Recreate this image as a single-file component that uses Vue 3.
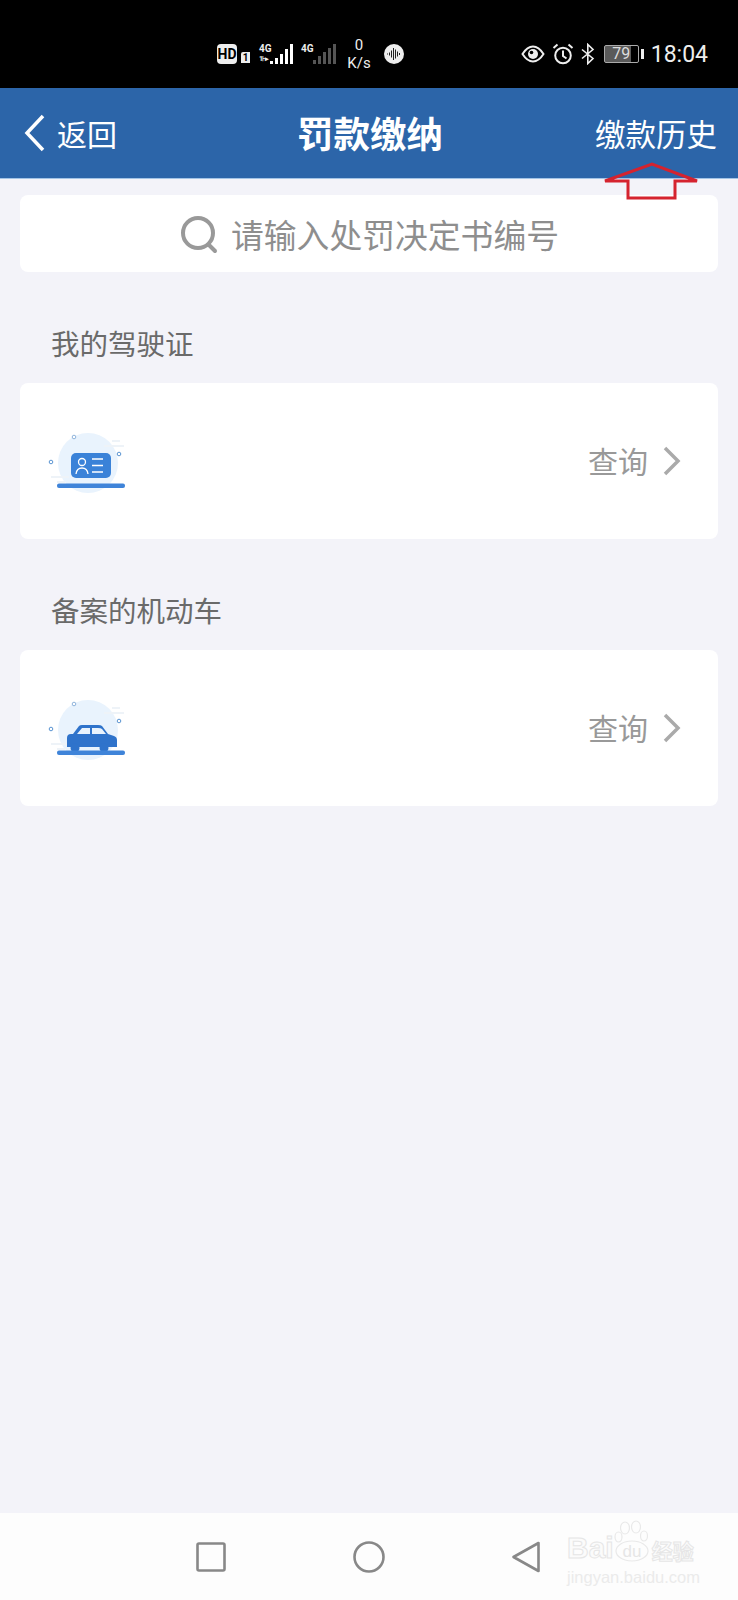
<script setup>
const sections = [
  { title: '我的驾驶证', kind: 'id' },
  { title: '备案的机动车', kind: 'car' },
]
</script>

<template>
  <div class="page">
    <div class="status">
      <div class="st-left">
        <span class="hd">HD</span>
        <span class="sim">1</span>
        <div class="net first">
          <div class="net-text"><span>4G</span><span>1⊦▸</span></div>
          <svg width="24" height="22" viewBox="0 0 24 22"><g fill="#fff"><rect x="0" y="18" width="3" height="3"/><rect x="5" y="15" width="3" height="6"/><rect x="10" y="11" width="3" height="10"/><rect x="15" y="6" width="3" height="15"/><rect x="20" y="1" width="3" height="20"/></g></svg>
        </div>
        <div class="net second">
          <div class="net-text"><span>4G</span><span>&nbsp;</span></div>
          <svg width="24" height="22" viewBox="0 0 24 22"><g fill="#555"><rect x="0" y="17" width="3" height="4"/><rect x="5" y="13" width="3" height="8"/><rect x="10" y="9" width="3" height="12"/><rect x="15" y="5" width="3" height="16"/><rect x="20" y="1" width="3" height="20"/></g></svg>
        </div>
        <div class="speed"><span>0</span><span>K/s</span></div>
        <svg class="wave" width="20" height="20" viewBox="0 0 20 20"><circle cx="10" cy="10" r="10" fill="#eee"/><path d="M3 10h1M5.500 8.500v3M7.500 6.500v7M9.500 4v12M11.500 5.500v9M13.500 7.500v5M15.500 9v2" stroke="#222" stroke-width="1" fill="none"/></svg>
      </div>
      <div class="st-right">
        <svg class="i-eye" width="24" height="18" viewBox="0 0 24 18"><path d="M1.500 9C5 3.500 8.500 1.500 12 1.500S19 3.500 22.500 9C19 14.500 15.500 16.500 12 16.500S5 14.500 1.500 9Z" fill="none" stroke="#eee" stroke-width="2"/><circle cx="12" cy="9" r="5" fill="#eee"/><circle cx="10.500" cy="7.500" r="1.800" fill="#000"/></svg>
        <svg class="i-alarm" width="22" height="22" viewBox="0 0 22 22"><circle cx="11" cy="12.500" r="7.800" fill="none" stroke="#eee" stroke-width="2"/><path d="M11 7.500V13l3.500 2.500M1.500 5 5.500 1.500M20.500 5l-4-3.500" fill="none" stroke="#eee" stroke-width="2"/></svg>
        <svg class="i-bt" width="14" height="22" viewBox="0 0 14 22"><path d="M1 6.500 12 15.500 6.800 20.500V1.500L12 6.500 1 15.500" fill="none" stroke="#eee" stroke-width="1.600"/></svg>
        <div class="battery"><div class="bat-body">79</div><div class="bat-cap"></div></div>
        <span class="clock">18:04</span>
      </div>
    </div>

    <header class="bar">
      <div class="back">
        <svg width="24" height="38" viewBox="0 0 24 38"><path d="M20 2 4 19l16 17" fill="none" stroke="#fff" stroke-width="3.500"/></svg>
        <span>返回</span>
      </div>
      <h1>罚款缴纳</h1>
      <span class="history">缴款历史</span>
      <svg class="arrow" width="96" height="38" viewBox="0 0 96 38"><path d="M2 19 49 2l45 17H72v17H25V19Z" fill="none" stroke="#d5232f" stroke-width="3"/></svg>
    </header>

    <main class="content">
      <div class="search">
        <svg width="40" height="40" viewBox="0 0 40 40"><circle cx="19" cy="19" r="15" fill="none" stroke="#999" stroke-width="4"/><path d="m30 31 6 6" stroke="#999" stroke-width="4" stroke-linecap="round"/></svg>
        <span>请输入处罚决定书编号</span>
      </div>

      <section v-for="s in sections" :key="s.title">
        <h2>{{ s.title }}</h2>
        <div class="card">
          <svg class="pic" width="84" height="64" viewBox="0 0 84 64">
            <circle cx="40" cy="33" r="30" fill="#e9f3fd"/>
            <path d="M56 16h20M64 11h8M3 47h18M9 52h8" stroke="#eef3f8" stroke-width="2"/>
            <circle cx="26" cy="7" r="1.800" fill="#fff" stroke="#8fb4dc"/>
            <circle cx="71" cy="24" r="1.800" fill="#fff" stroke="#5a94d2"/>
            <circle cx="3" cy="32" r="1.800" fill="#fff" stroke="#5a94d2"/>
            <template v-if="s.kind === 'id'">
              <rect x="23" y="23" width="40" height="25" rx="5" fill="#3a82d8"/>
              <circle cx="34" cy="32" r="3.500" fill="none" stroke="#fff" stroke-width="1.300"/>
              <path d="M28 44c.5-4 2.500-6 6-6s5.500 2 6 6M44 29h11M44 35.500h11M44 42h11" fill="none" stroke="#fff" stroke-width="1.300"/>
            </template>
            <template v-else>
              <path d="M19 50V41q0-4 4-4h2l6-8q1-1 3-1h16q3 0 4 1l6 8 6 2q3 1 3 4v7Z" fill="#2f73cb"/>
              <path d="M29 37l5-6h8v6ZM44 31h6q3 0 4 1l4 5H44Z" fill="#e9f3fd"/>
              <circle cx="27" cy="51" r="4.500" fill="#2f73cb"/>
              <circle cx="56" cy="51" r="4.500" fill="#2f73cb"/>
            </template>
            <rect x="9" y="53.500" width="68" height="4.500" rx="2" fill="#3f84d9"/>
          </svg>
          <div class="action">
            <span>查询</span>
            <svg width="18" height="30" viewBox="0 0 18 30"><path d="m2 2 13 13L2 28" fill="none" stroke="#aaa" stroke-width="3.500"/></svg>
          </div>
        </div>
      </section>
    </main>

    <nav class="nav">
      <div class="keys">
        <svg width="30" height="30" viewBox="0 0 30 30"><rect x="1.500" y="1.500" width="27" height="27" rx="1.500" fill="none" stroke="#888" stroke-width="2.600"/></svg>
        <svg width="32" height="32" viewBox="0 0 32 32"><circle cx="16" cy="16" r="14.500" fill="none" stroke="#888" stroke-width="2.600"/></svg>
        <svg width="28" height="32" viewBox="0 0 28 32"><path d="M26.500 2v28L1.500 16Z" fill="none" stroke="#888" stroke-width="2.600" stroke-linejoin="round"/></svg>
      </div>
      <div class="mark">
        <div class="mark-top">
          <span class="mark-bai">Bai</span>
          <svg width="36" height="46" viewBox="0 0 36 46">
            <g fill="none" stroke="#e9e9e9" stroke-width="1.200">
              <ellipse cx="11" cy="9" rx="4.500" ry="6"/>
              <ellipse cx="22" cy="8" rx="4.500" ry="6"/>
              <ellipse cx="4.500" cy="18" rx="3.500" ry="5"/>
              <ellipse cx="30" cy="17" rx="3.500" ry="5"/>
              <ellipse cx="18" cy="32" rx="16" ry="10"/>
            </g>
            <text x="18" y="38" text-anchor="middle" font-size="17" font-family="Liberation Sans" fill="#e6e6e6">du</text>
          </svg>
          <span class="mark-cn">经验</span>
        </div>
        <div class="mark-sub">jingyan.baidu.com</div>
      </div>
    </nav>
  </div>
</template>

<style scoped>
.page {
  width: 738px;
  height: 1600px;
  background: #f3f3f9;
  display: flex;
  flex-direction: column;
  font-family: "Noto Sans CJK SC", "Noto Sans", sans-serif;
  overflow: hidden;
}
.status {
  height: 88px;
  background: #000;
  color: #eee;
  display: flex;
  align-items: center;
  justify-content: space-between;
  padding: 20px 30px 0 217px;
  box-sizing: border-box;
  font-family: Roboto, sans-serif;
}
.st-left, .st-right, .net { display: flex; align-items: center; }
.hd {
  background: #eee;
  color: #000;
  font-size: 14px;
  font-weight: 700;
  border-radius: 4px;
  width: 20px;
  height: 20px;
  line-height: 20px;
  text-align: center;
}
.sim {
  background: #eee;
  color: #000;
  font-size: 10px;
  font-weight: 700;
  width: 9px;
  height: 11px;
  line-height: 11px;
  margin: 6px 0 0 4px;
  text-align: center;
  border-radius: 2px 0 0 0;
}
.net.first { margin-left: 9px; }
.net.second { margin-left: 7px; }
.net-text {
  display: flex;
  flex-direction: column;
  width: 11px;
  font-size: 10px;
  line-height: 11px;
  font-weight: 700;
  white-space: nowrap;
}
.net.second .net-text { width: 12px; }
.net-text span:last-child { font-size: 7px; letter-spacing: -1px; }
.speed {
  display: flex;
  flex-direction: column;
  align-items: center;
  font-size: 15px;
  line-height: 18px;
  margin-left: 9px;
  width: 26px;
}
.wave { margin-left: 12px; }
.st-right svg { display: block; }
.i-alarm { margin-left: 7px; }
.i-bt { margin-left: 7px; }
.battery { display: flex; align-items: center; margin-left: 9px; }
.bat-body {
  width: 35px;
  height: 18px;
  box-sizing: border-box;
  border: 1px solid #aaa;
  border-radius: 2px;
  background: linear-gradient(90deg, #5a5a5a 79%, #000 79%);
  font-size: 16px;
  line-height: 16px;
  text-align: center;
  color: #ddd;
}
.bat-cap { width: 3px; height: 10px; background: #eee; margin-left: 2px; }
.clock { font-size: 23px; margin-left: 7px; color: #eee; }

.bar {
  position: relative;
  height: 91px;
  background: #2c65a9;
  border-bottom: 1px solid #a3c4e6;
  color: #fff;
  display: grid;
  grid-template-columns: 1fr auto 1fr;
  align-items: center;
  padding: 0 21px 0 23px;
  box-sizing: border-box;
}
.back { display: flex; align-items: center; gap: 10px; font-size: 30px; }
.back svg { display: block; }
h1 { margin: 0; font-size: 36.500px; font-weight: 700; line-height: 1; }
.history { font-size: 30.500px; justify-self: end; }
.arrow { position: absolute; right: 39px; bottom: -22px; }

.content { flex: 1; padding: 16px 20px 0; }
.search {
  height: 77px;
  background: #fff;
  border-radius: 8px;
  display: flex;
  align-items: center;
  justify-content: center;
  gap: 12px;
  color: #8e8e8e;
  font-size: 32.800px;
}
section h2 {
  margin: 0;
  padding: 49px 0 0 31px;
  height: 111px;
  box-sizing: border-box;
  line-height: 44px;
  font-size: 28.500px;
  font-weight: 400;
  color: #6a6a6a;
}
.card {
  height: 156px;
  background: #fff;
  border-radius: 8px;
  display: flex;
  align-items: center;
  justify-content: space-between;
  padding: 0 37px 0 28px;
  box-sizing: border-box;
}
.pic { display: block; overflow: visible; margin-top: 2px; }
.action { display: flex; align-items: center; gap: 15px; font-size: 30px; color: #999; }
.action span { margin-top: -2px; }
.action svg { display: block; }

.nav {
  position: relative;
  height: 87px;
  background: #fdfdfd;
}
.keys {
  display: flex;
  align-items: center;
  justify-content: space-between;
  width: 344px;
  height: 87px;
  margin-left: 196px;
}
.mark {
  position: absolute;
  left: 567px;
  top: 6px;
  color: #ebebeb;
  font-family: "Liberation Sans", sans-serif;
  line-height: 1;
}
.mark-top { display: flex; align-items: flex-end; white-space: nowrap; }
.mark-bai {
  font-size: 30px;
  font-weight: 700;
  color: #fbfbfb;
  -webkit-text-stroke: 1px #e6e6e6;
  margin-bottom: 2px;
}
.mark-top svg { display: block; margin-left: 0; }
.mark-cn {
  font-family: "Noto Sans CJK SC", sans-serif;
  font-size: 21px;
  font-weight: 700;
  color: #fbfbfb;
  -webkit-text-stroke: 1px #e6e6e6;
  margin-left: 2px;
  margin-bottom: 4px;
}
.mark-sub { font-size: 16.500px; margin-top: 4px; white-space: nowrap; }
</style>
